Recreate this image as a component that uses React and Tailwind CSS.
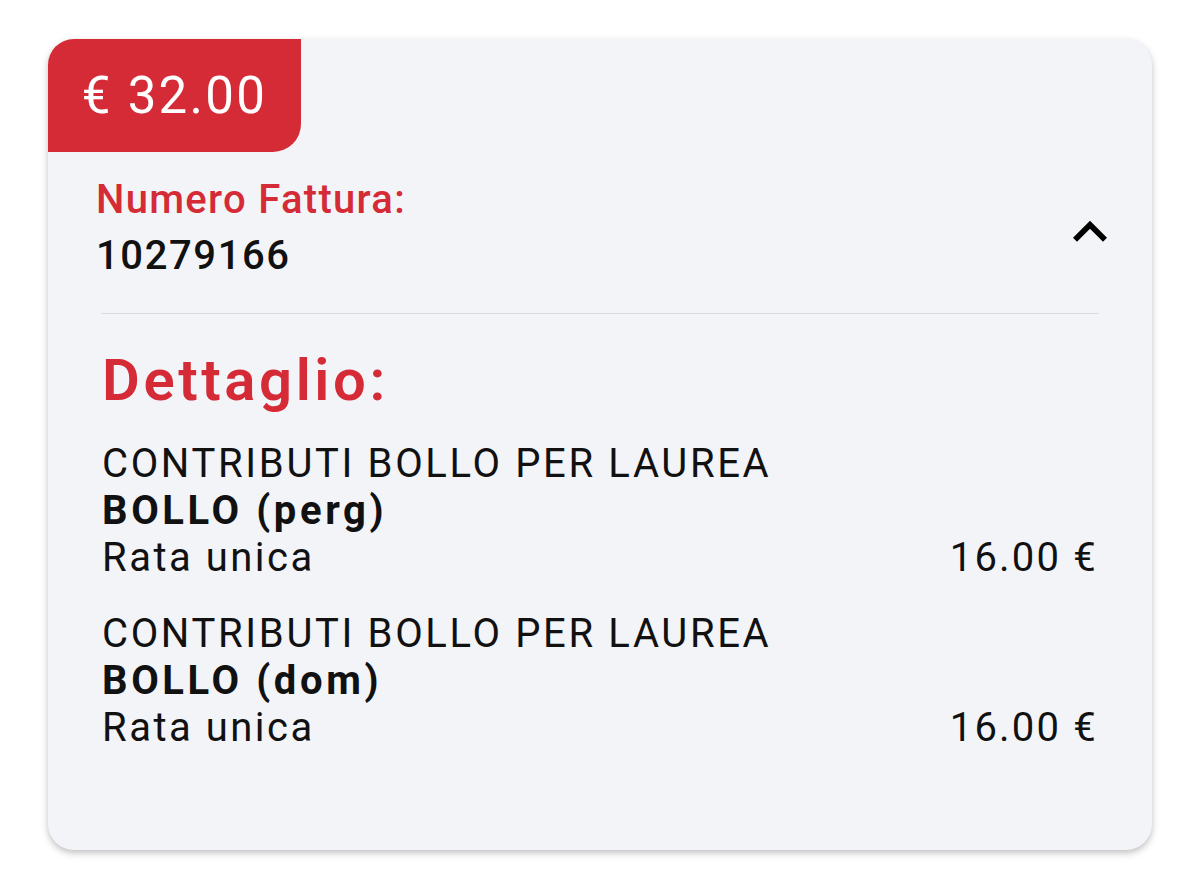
const items = [
    { title: "CONTRIBUTI BOLLO PER LAUREA", name: "BOLLO (perg)", rata: "Rata unica", amount: "16.00 €" },
    { title: "CONTRIBUTI BOLLO PER LAUREA", name: "BOLLO (dom)", rata: "Rata unica", amount: "16.00 €" },
]

export default function App() {
    return (
        <div className="min-h-[885px] bg-white pt-[39px] pl-[48px] font-['Roboto',sans-serif]">
            <div className="w-[1104px] h-[811px] rounded-[26px] bg-[#f3f4f8] shadow-[0_3px_7px_rgba(0,0,0,0.25)] overflow-hidden flex flex-col">
                {/* BADGE */}
                <div className="w-[253px] h-[113px] bg-[#d42b36] rounded-br-[28px] flex items-center justify-center">
                    <span className="text-white text-[51px] leading-none tracking-[2.3px]">€ 32.00</span>
                </div>

                {/* HEADER */}
                <div className="flex items-center justify-between pl-[48px] pr-[28px] mt-[24px]">
                    <div>
                        <p className="text-[#d42b36] text-[40px] leading-[48px] font-medium tracking-[1.3px]">Numero Fattura:</p>
                        <p className="text-[#111] text-[40px] leading-[48px] font-medium mt-[8px] tracking-[1.6px]">10279166</p>
                    </div>
                    <svg width="68" height="68" viewBox="0 0 24 24" className="mt-[8px]">
                        <path d="M12 8l-6 6 1.41 1.41L12 10.83l4.59 4.58L18 14z" fill="#000" />
                    </svg>
                </div>

                <div className="mx-[53px] mt-[33px] h-px bg-[#dcdde2]" />

                {/* DETTAGLIO */}
                <div className="pl-[54px] pr-[54px] mt-[32px]">
                    <h2 className="text-[#d42b36] text-[58px] leading-[68px] font-semibold tracking-[3.6px]">Dettaglio:</h2>
                    <div className="mt-[26px] flex flex-col gap-[29px]">
                        {items.map((item, i) => (
                            <div key={i} className="text-[40px] leading-[47px] text-[#111]">
                                <p className="tracking-[2.65px]">{item.title}</p>
                                <p className="font-bold tracking-[3.6px]">{item.name}</p>
                                <div className="flex justify-between">
                                    <span className="tracking-[2.5px]">{item.rata}</span>
                                    <span className="tracking-[2.2px]">{item.amount}</span>
                                </div>
                            </div>
                        ))}
                    </div>
                </div>
            </div>
        </div>
    )
}
